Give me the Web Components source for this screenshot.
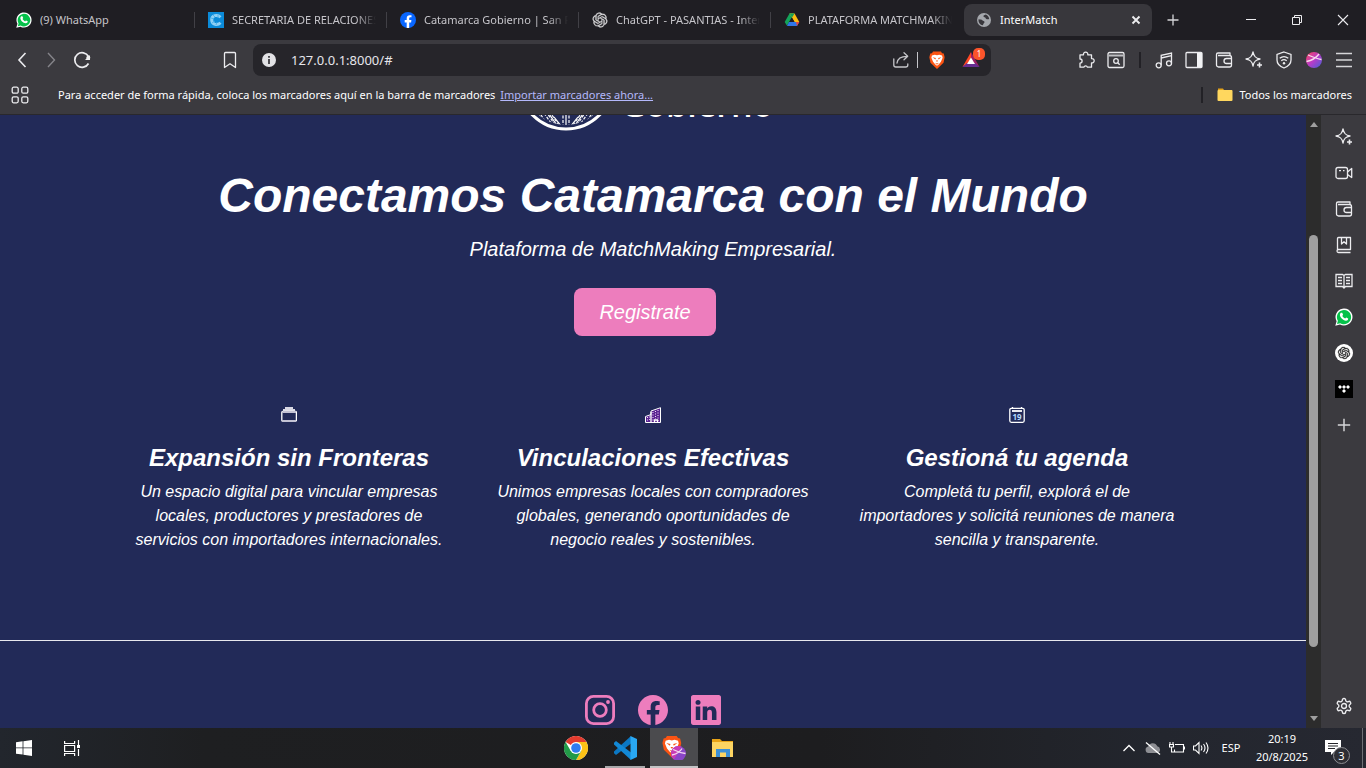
<!DOCTYPE html>
<html lang="es">
<head>
<meta charset="utf-8">
<title>InterMatch</title>
<style>
html, body { height: 100%; margin: 0; }
body { font-family: "Noto Sans", "Open Sans", sans-serif; font-size: 11px; color: #fff; background: #1f1e23; overflow: hidden; }
</style>
</head>
<body>
<desktop-shell></desktop-shell>

<script>
const KNOT = 'M22.2819 9.8211a5.9847 5.9847 0 0 0-.5157-4.9108 6.0462 6.0462 0 0 0-6.5098-2.9A6.0651 6.0651 0 0 0 4.9807 4.1818a5.9847 5.9847 0 0 0-3.9977 2.9 6.0462 6.0462 0 0 0 .7427 7.0966 5.98 5.98 0 0 0 .511 4.9107 6.051 6.051 0 0 0 6.5146 2.9001A5.9847 5.9847 0 0 0 13.2599 24a6.0557 6.0557 0 0 0 5.7718-4.2058 5.9894 5.9894 0 0 0 3.9977-2.9001 6.0557 6.0557 0 0 0-.7475-7.0729zm-9.022 12.6081a4.4755 4.4755 0 0 1-2.8764-1.0408l.1419-.0804 4.7783-2.7582a.7948.7948 0 0 0 .3927-.6813v-6.7369l2.02 1.1686a.071.071 0 0 1 .038.052v5.5826a4.504 4.504 0 0 1-4.4945 4.4944zm-9.6607-4.1254a4.4708 4.4708 0 0 1-.5346-3.0137l.142.0852 4.783 2.7582a.7712.7712 0 0 0 .7806 0l5.8428-3.3685v2.3324a.0804.0804 0 0 1-.0332.0615L9.74 19.9502a4.4992 4.4992 0 0 1-6.1408-1.6464zM2.3408 7.8956a4.485 4.485 0 0 1 2.3655-1.9728V11.6a.7664.7664 0 0 0 .3879.6765l5.8144 3.3543-2.0201 1.1685a.0757.0757 0 0 1-.071 0l-4.8303-2.7865A4.504 4.504 0 0 1 2.3408 7.872zm16.5963 3.8558L13.1038 8.364 15.1192 7.2a.0757.0757 0 0 1 .071 0l4.8303 2.7913a4.4944 4.4944 0 0 1-.6765 8.1042v-5.6772a.79.79 0 0 0-.407-.667zm2.0107-3.0231l-.142-.0852-4.7735-2.7818a.7759.7759 0 0 0-.7854 0L9.409 9.2297V6.8974a.0662.0662 0 0 1 .0284-.0615l4.8303-2.7866a4.4992 4.4992 0 0 1 6.6802 4.66zM8.3065 12.863l-2.02-1.1638a.0804.0804 0 0 1-.038-.0567V6.0742a4.4992 4.4992 0 0 1 7.3757-3.4537l-.142.0805L8.704 5.459a.7948.7948 0 0 0-.3927.6813zm1.0976-2.3654l2.602-1.4998 2.6069 1.4998v2.9994l-2.5974 1.4997-2.6067-1.4997Z';
const LION = '<path fill="#fb5413" d="M4.500 .5h7l1 1.500 1.500.3.8 3.200-1 5L8 16 2.200 10.500l-1-5L2 2.300 3.500 2z"/><path fill="#fff" d="M3.500 4 6 3.300 8 3.800l2-.5 2.500.7.5 2-1.500 3.500L9.500 12 8 13 6.500 12l-2-2.500L3 6z"/><path fill="#fb5413" d="M4 5.600 7 6.300l-.4 1.300zM12 5.600 9 6.300l.4 1.300zM7 8.500h2l-1 1.300zM6.200 10.400 8 11.200l1.800-.8L8 12.200z"/>';

/* name: [viewBox, markup]; outlined glyphs inherit stroke and fill from the root <svg> */
const ICONS = {
  whatsapp: ['0 0 18 18', '<path fill="#fff" stroke="none" d="M.3 17.700l1.300-4.500A8.500 8.500 0 1 1 5 16.500z"/><path fill="#05c24a" stroke="none" d="M2 16l.9-3.200A7.100 7.100 0 1 1 5.300 15.200z"/><path fill="#fff" stroke="none" d="M6 4.800h1.200l.9 2-.8 1.200c.7 1.200 1.600 2 2.900 2.600l1-1.100 2 1c0 1.500-1 2.300-2.300 2.200C7.800 12.300 5 9.300 4.900 7c0-1 .4-1.800 1.100-2.200z"/>'],
  catamarca: ['0 0 16 16', '<path fill="#0b8bd9" stroke="none" d="M0 0h16v16H0z"/><path stroke="#8fd0f5" stroke-width="3" d="M12.500 5.200C9.500 2.200 3.500 3 3.700 8s5.800 5.800 8.800 2.800"/><path stroke="#3fabe8" stroke-width=".8" d="M3 6l3 1M5 3l2 2M4 11l3-2M8 13l1-3M10 3v3"/>'],
  facebook: ['0 0 16 16', '<circle cx="8" cy="8" r="8" fill="#0866ff" stroke="none"/><path fill="#fff" stroke="none" d="M6.700 16v-5.600h-2V8h2V6.300c0-2 1.200-3.100 3-3.100.9 0 1.800.1 1.800.1v2h-1c-1 0-1.300.6-1.300 1.200V8h2.200l-.3 2.400H9.200V16z"/>'],
  gpt: ['-1 -1 26 26', `<path fill="#d9d9dc" stroke="#d9d9dc" stroke-width=".5" d="${KNOT}"/>`],
  gptDisc: ['-6 -6 36 36', `<circle cx="12" cy="12" r="18" fill="#fff" stroke="none"/><path fill="#222" stroke="#222" stroke-width=".6" d="${KNOT}"/>`],
  drive: ['0 0 16 16', '<g stroke="none"><path fill="#14a35a" d="M5.500 1.500H10L5.200 9.800 3 13.800.7 9.900z"/><path fill="#fdbd10" d="M5.500 1.500h5l4.800 8.400h-4.800z"/><path fill="#14a35a" d="M5.500 1.500h5L8 5.700z"/><path fill="#2f76e8" d="M5 9.900h10.300L13 14H3z"/><path fill="#e8453c" d="M12 9.900h3.300L13 14z"/><path fill="#1f1e23" d="M8 5.700l2.500 4.200h-5z"/></g>'],
  globe: ['0 0 16 16', '<circle cx="8" cy="8" r="7" fill="#a4a7ac" stroke="none"/><path fill="#38373c" stroke="none" d="M2.600 7.200c2 .2 3 .2 3.700 1 .7 1 2.200.6 2.300 1.800.1 1-1.500 1-1.600 3.300C4 13 2 10 2.600 7.200zM9.800 2.500c-1.500.6-2.500.8-2.300 2 .2 1 1.800.5 2.200 1.700.3 1 1.700 1.200 3.500.8-.2-2-1.600-3.900-3.400-4.500z"/>'],
  close: ['0 0 16 16', '<path stroke-width="1.900" d="M4.500 4.500l7 7m0-7l-7 7"/>'],
  plus: ['0 0 16 16', '<path stroke="#d6d6d9" d="M8 2.500v11M2.500 8h11"/>'],
  min: ['0 0 16 16', '<path stroke-width="1" d="M3 7.500h10"/>'],
  restore: ['0 0 16 16', '<path stroke-width="1" d="M3.500 5.500h7v7h-7zM5.500 5.500v-2h7v7h-2"/>'],
  winclose: ['0 0 16 16', '<path stroke-width="1.100" d="M3 3l10 10M13 3L3 13"/>'],
  back: ['0 0 18 18', '<path stroke-width="1.600" d="M12.500 2L6 9l6.500 7"/>'],
  forward: ['0 0 18 18', '<path stroke="#85848a" stroke-width="1.400" d="M5 2l6.500 7L5 16"/>'],
  reload: ['0 0 18 18', '<path stroke-width="1.700" d="M15.500 12.500A7.300 7.300 0 1 1 15.500 5.500"/><circle cx="15.300" cy="6.700" r="2" fill="#eee" stroke="none"/><path fill="#eee" stroke="none" d="M17 4v5h-5z"/>'],
  bookmark: ['0 0 18 18', '<path stroke-linejoin="round" d="M4.500 1.500h9a1 1 0 0 1 1 1V16.500L9 12.800 3.500 16.500V2.500a1 1 0 0 1 1-1z"/>'],
  info: ['0 0 18 18', '<circle cx="9" cy="9" r="7" fill="#e2e2e5" stroke="none"/><path stroke="#26252a" stroke-width="1.600" d="M9 8v5M9 5v1.700"/>'],
  share: ['0 0 18 18', '<path stroke="#c5c5c9" stroke-linecap="round" stroke-linejoin="round" d="M1.800 8v6a2 2 0 0 0 2 2h10a2 2 0 0 0 2-2v-1M5 12c.5-4 3-6.700 10-6.700M12 1.800l3.700 3.500L12 8.800"/>'],
  brave: ['0 0 16 16', `<g stroke="none">${LION}</g>`],
  rewards: ['0 0 18 18', '<g stroke="none"><path fill="#ff4724" d="M9 1L.5 16 9 11z"/><path fill="#9e1f63" d="M9 1l8.500 15L9 10z"/><path fill="#662d91" d="M.5 16h17L13 12H5z"/><path fill="#fff" d="M9 6.500l4 6.500H5z"/></g>'],
  puzzle: ['0 0 18 18', '<path stroke-linejoin="round" d="M3 3.800h3.500a2.200 2.200 0 1 1 4.300 0h3.700v3.800a2.200 2.200 0 1 1 0 4.300v4.300h-4a2 2 0 0 0-3.700 0H3v-4a2.100 2.100 0 1 0 0-4.200z"/>'],
  pagesearch: ['0 0 18 18', '<rect x="1" y="1.500" width="16" height="15" rx="1.500"/><path stroke-width="2" stroke="#bfbfc3" d="M1.500 4.500h15"/><circle cx="9" cy="10" r="2.300"/><path d="M10.700 11.700l2 2"/>'],
  music: ['0 0 18 18', '<circle cx="3.700" cy="14.300" r="2.500"/><circle cx="14" cy="12.300" r="2.500"/><path d="M6.200 14.300V4.300L16.500 2v10.300M6.200 7L16.500 4.700"/>'],
  panel: ['0 0 18 18', '<rect x="1" y="1.500" width="16" height="15" rx="1"/><path fill="#f2f2f4" stroke="none" d="M12 2h5v14h-5z"/>'],
  wallet: ['0 0 18 18', '<path stroke-linejoin="round" d="M3 4.500h11.500a2 2 0 0 1 2 2V14a2 2 0 0 1-2 2h-11a2 2 0 0 1-2-2V3.500a1.500 1.500 0 0 1 1.500-1.500h12v2.500M16.500 7.500h-5a2.500 2.500 0 0 0 0 5h5"/>'],
  spark: ['0 0 18 18', '<path stroke-linejoin="round" d="M8 1c.9 4.500 2.500 6.100 7 7-4.500.9-6.100 2.500-7 7-.9-4.500-2.500-6.100-7-7 4.500-.9 6.100-2.500 7-7z"/><path stroke-width="1.600" d="M14.500 11.500v5M12 14h5"/>'],
  vpn: ['0 0 18 18', '<path d="M9 1l7 2.500V9c0 4-3 6.500-7 8-4-1.500-7-4-7-8V3.500z"/><path d="M4.700 7.300c2.500-2 6-2 8.600 0M6.300 9.800c1.600-1.300 3.800-1.300 5.400 0"/><circle cx="9" cy="12.200" r="1.200" fill="#eee" stroke="none"/>'],
  ball: ['0 0 18 18', '<defs><linearGradient id="b" x1="0" x2="1" y2="1"><stop offset=".1" stop-color="#f0456f"/><stop offset=".5" stop-color="#b83bc8"/><stop offset="1" stop-color="#4361d8"/></linearGradient></defs><circle cx="9" cy="9" r="8" fill="url(#b)" stroke="none"/><path stroke="#f9d9ee" d="M1.500 10.500C7 9.500 11 7 14 3M3 4c4 1.500 9 4 13.500 4.500"/>'],
  menu: ['0 0 18 18', '<path stroke="#d6d6d9" stroke-width="1.600" d="M1 2.500h16M1 9h16M1 15.500h16"/>'],
  grid: ['0 0 18 18', '<rect x="1.200" y="1.200" width="6" height="6" rx="1.500"/><rect x="10.800" y="1.200" width="6" height="6" rx="1.500"/><rect x="1.200" y="10.800" width="6" height="6" rx="1.500"/><rect x="10.800" y="10.800" width="6" height="6" rx="1.500"/>'],
  folder: ['0 0 16 16', '<path fill="#e3a21a" stroke="none" d="M1 1.500h5L7 3h8v9H1z"/><rect x=".5" y="3" width="15" height="11" rx="1" fill="#ffd75e" stroke="none"/>'],
  video: ['0 0 18 18', '<rect x="1" y="3.500" width="11.500" height="11" rx="2"/><path stroke-linejoin="round" d="M12.500 8l4.200-3.500v9L12.500 10.500M4 6.700h2M8 6.700h1.500"/>'],
  reading: ['0 0 18 18', '<path stroke-linejoin="round" d="M2.500 14.500V2.500a1 1 0 0 1 1-1h12v12h-12a1.300 1.300 0 0 0 0 3h12M6.500 1.500v6.500L9 5.800 11.500 8V1.500"/>'],
  book: ['0 0 18 18', '<path d="M1 2.500h6.500L9 3.500l1.500-1H17v12h-6.500L9 16l-1.500-1.500H1zM9 3.500V16.500M3 5.500h4M3 8.500h4M3 11.500h4M11 5.500h4M11 8.500h4M11 11.500h4"/>'],
  tidal: ['0 0 18 18', '<path fill="#000" stroke="none" d="M0 0h18v18H0z"/><path fill="#fff" stroke="none" d="M5 5l2 2-2 2-2-2zM9 5l2 2-2 2-2-2zM13 5l2 2-2 2-2-2zM9 9l2 2-2 2-2-2z"/>'],
  gear: ['0 0 24 24', '<path stroke-width="1.800" d="M12.220 2h-.44a2 2 0 0 0-2 2v.18a2 2 0 0 1-1 1.730l-.43.25a2 2 0 0 1-2 0l-.15-.08a2 2 0 0 0-2.730.73l-.22.38a2 2 0 0 0 .73 2.730l.15.1a2 2 0 0 1 1 1.720v.51a2 2 0 0 1-1 1.740l-.15.09a2 2 0 0 0-.73 2.730l.22.38a2 2 0 0 0 2.730.73l.15-.08a2 2 0 0 1 2 0l.43.25a2 2 0 0 1 1 1.730V20a2 2 0 0 0 2 2h.44a2 2 0 0 0 2-2v-.18a2 2 0 0 1 1-1.730l.43-.25a2 2 0 0 1 2 0l.15.08a2 2 0 0 0 2.730-.73l.22-.39a2 2 0 0 0-.73-2.730l-.15-.08a2 2 0 0 1-1-1.740v-.5a2 2 0 0 1 1-1.740l.15-.09a2 2 0 0 0 .73-2.730l-.22-.38a2 2 0 0 0-2.730-.73l-.15.08a2 2 0 0 1-2 0l-.43-.25a2 2 0 0 1-1-1.730V4a2 2 0 0 0-2-2z"/><circle cx="12" cy="12" r="3.300" stroke-width="1.800"/>'],
  briefcase: ['0 0 16 16', '<path fill="#d9d8e4" stroke="none" d="M4 0h8v2h2v2H2V2h2z"/><rect x=".8" y="4.500" width="14.600" height="9.700" rx="1" stroke="#fff"/><path stroke="#c3c2d4" stroke-width="1.800" d="M1.500 14h13.500M1.500 5h13.500"/>'],
  building: ['0 0 16 16', '<path fill="#5a2391" stroke="#fff" stroke-width="1" d="M.5 15.500V9.500l5.500-2V4L15.500.7v14.800z"/><path stroke="#f3d9f6" stroke-width="1.100" stroke-dasharray="1.100 1.400" d="M8 5v9M10.500 4v8M13 3v12M2.500 10v5M4.700 9.500v5"/><path stroke="#fff" d="M6 5v10M9.500 15.500V13h3v2.500"/>'],
  calendar: ['0 0 16 16', '<rect x=".8" y="1.300" width="14.400" height="14" rx="1.500" stroke="#fff"/><path stroke="#fff" stroke-width="1.800" d="M3 4h10"/><path stroke="#fff" d="M3.500 0v2M12.500 0v2"/><text x="8" y="13" text-anchor="middle" font-size="8" font-weight="700" font-style="normal" font-family="Noto Sans, sans-serif" fill="#b5dcff" stroke="none">19</text>'],
  ig: ['0 0 30 30', '<rect x="1.400" y="1.400" width="27.200" height="27.200" rx="7" stroke="#ed7dbd" stroke-width="2.800"/><circle cx="15" cy="15" r="6.300" stroke="#ed7dbd" stroke-width="2.800"/><circle cx="23" cy="7" r="1.900" fill="#ed7dbd" stroke="none"/>'],
  fb: ['0 0 16 16', '<path fill="#ed7dbd" stroke="none" d="M16 8.049c0-4.446-3.582-8.050-8-8.050C3.580 0-.002 3.603-.002 8.050c0 4.017 2.926 7.347 6.750 7.951v-5.625h-2.030V8.050H6.750V6.275c0-2.017 1.195-3.131 3.022-3.131.876 0 1.791.157 1.791.157v1.980h-1.009c-.993 0-1.303.621-1.303 1.258v1.510h2.218l-.354 2.326H9.250V16c3.824-.604 6.750-3.934 6.750-7.951"/>'],
  li: ['0 0 16 16', '<path fill="#ed7dbd" stroke="none" d="M0 1.146C0 .513.526 0 1.175 0h13.650C15.474 0 16 .513 16 1.146v13.708c0 .633-.526 1.146-1.175 1.146H1.175C.526 16 0 15.487 0 14.854zm4.943 12.248V6.169H2.542v7.225zm-1.200-8.212c.837 0 1.358-.554 1.358-1.248-.015-.709-.520-1.248-1.342-1.248S2.400 3.226 2.400 3.934c0 .694.521 1.248 1.327 1.248zm4.908 8.212V9.359c0-.216.016-.432.080-.586.173-.431.568-.878 1.232-.878.869 0 1.216.662 1.216 1.634v3.865h2.401V9.250c0-2.220-1.184-3.252-2.764-3.252-1.274 0-1.845.7-2.165 1.193v.025h-.016l.016-.025V6.169h-2.400c.03.678 0 7.225 0 7.225z"/>'],
  windows: ['0 0 16 16', '<path fill="#fff" stroke="none" d="M0 2.200l6.600-.9v6.200H0zM7.400 1.200L16 0v7.500H7.400zM0 8.300h6.600v6.300L0 13.700zM7.400 8.300H16V16l-8.600-1.200z"/>'],
  taskview: ['0 0 16 16', '<path stroke="#fff" stroke-width="1.200" d="M.6 1v2.500h10V1M.6 5.500h10v6H.6zM.6 16v-2.500h10V16M14.500 0v5M14.500 9v7"/><path fill="#fff" stroke="none" d="M13 5h3v3h-3z"/>'],
  chrome: ['0 0 24 24', '<g stroke="none"><circle cx="12" cy="12" r="12" fill="#fff"/><path fill="#e33b2e" d="M12 12L1.600 6A12 12 0 0 1 22.400 6z"/><path fill="#fbc116" d="M12 6h10.400A12 12 0 0 1 12 24l5.200-9z"/><path fill="#229a48" d="M1.600 6l5.200 9L12 18l0 6A12 12 0 0 1 1.600 6z"/><path fill="#229a48" d="M12 24l5.200-9H7z"/><circle cx="12" cy="12" r="6" fill="#fff"/><circle cx="12" cy="12" r="4.800" fill="#2f7cf0"/></g>'],
  vscode: ['0 0 24 24', '<g stroke="none"><path fill="#0b78c4" d="M18 0L1 15.500v1.700L3 19l15-11.500z"/><path fill="#1389d6" d="M18 24L1 8.500V6.800L3 5l15 11.500z"/><path fill="#29a8f3" d="M17.500 0L24 3v18l-6.500 3z"/></g>'],
  bravetask: ['0 0 24 24', `<g stroke="none"><g transform="translate(-1.200 -.7) scale(1.380)">${LION}</g><circle cx="16.500" cy="17.500" r="7.500" fill="#8a45c8"/><path fill="#c83bb5" d="M9.500 15a7.500 7.500 0 0 1 10-4.500L12 23.500A7.500 7.500 0 0 1 9.500 15z"/></g><path stroke="#f4d7f0" stroke-width="1.300" d="M10 19c4-1 8-3 10-6.500M11 13.500c4 2 8 3.500 12.500 4"/>`],
  explorer: ['0 0 24 24', '<g stroke="none"><path fill="#e8a317" d="M1 3h8l2 2h11v5H1z"/><path fill="#fcd462" d="M1 6h21v15H1z"/><path fill="#3b8fd6" d="M5 13h14v8h-4v-4.500H9V21H5z"/></g>'],
  caret: ['0 0 16 16', '<path stroke="#fff" d="M2.500 11L8 5.500l5.500 5.500"/>'],
  cloud: ['0 0 16 16', '<path fill="#8e8f94" stroke="none" d="M3.500 13a3.300 3.300 0 0 1-.3-6.500 4.800 4.800 0 0 1 9-.3A3.500 3.500 0 0 1 12.500 13z"/><path stroke="#fff" d="M1 2.500l14 12"/>'],
  battery: ['0 0 16 16', '<path stroke="#fff" stroke-width="1.100" d="M6 4.500h8.500v7.500h-9M15.500 6.500v3M1 2v2.500M4 2v2.500M.5 4.500h4v2.500h-4zM2.500 7v5h3V9.500"/>'],
  volume: ['0 0 16 16', '<path stroke="#fff" stroke-width="1.100" d="M.5 6h2L6 2.500v11L2.500 10h-2zM8 5.500q1.800 2.500 0 5M10.500 4q3 4 0 8M13 2.500q4 5.500 0 11"/>'],
  notice: ['0 0 16 16', '<path fill="#fff" stroke="none" d="M0 0h16v12H9l-3 3v-3H0z"/><path stroke="#25262b" stroke-width="1.200" d="M3 3.500h10M3 6h10M3 8.500h7"/>'],
  seal: ['0 0 98 98', '<defs><clipPath id="c"><circle cx="49" cy="49" r="43"/></clipPath></defs><circle cx="49" cy="49" r="47" stroke="#fff" stroke-width="3"/><g clip-path="url(#c)" stroke="#fff" stroke-width="1.200"><path d="M49 98V50M45 94l-8-10M53 94l8-10M44 98L30 78M54 98l14-20" /><path stroke-dasharray="3 1.500" d="M46 78v16M52 78v16M42 92l-10-14M56 92l10-14M38 92l-8-12M60 92l8-12M34 90l-10-14M64 90l10-14M28 88l-8-12M70 88l8-12M24 85l-8-10M74 85l8-10"/></g>']
};

function define(name, css, html) {
  const template = document.createElement('template');
  template.innerHTML = `<style>*{box-sizing:border-box}button{font:inherit;color:inherit;background:none;border:0;padding:0;margin:0;cursor:pointer}${css}</style>${html}`;
  customElements.define(name, class extends HTMLElement {
    constructor() {
      super();
      this.attachShadow({ mode: 'open' }).append(template.content.cloneNode(true));
    }
  });
}

customElements.define('app-icon', class extends HTMLElement {
  connectedCallback() {
    if (this.shadowRoot) return;
    const [box, art] = ICONS[this.getAttribute('name')];
    const size = this.getAttribute('size') || 18;
    this.attachShadow({ mode: 'open' }).innerHTML =
      `<style>:host{display:block;flex:none;width:${size}px;height:${size}px}svg{display:block}</style>
       <svg width="${size}" height="${size}" viewBox="${box}" fill="none" stroke="#ececef" stroke-width="1.300" aria-hidden="true">${art}</svg>`;
  }
});

define('icon-button', `
  :host { display: block; flex: none; width: 30px; height: 30px; }
  button { width: 100%; height: 100%; display: flex; align-items: center; justify-content: center; }
`, `<button type="button"><slot></slot></button>`);

define('browser-tab', `
  :host { display: flex; align-items: center; gap: 8px; flex: 0 1 192px; min-width: 0; height: 32px; padding: 0 11px 0 13px; position: relative; color: #c6c5ca; }
  :host::after { content: ""; position: absolute; right: 0; top: 8px; width: 1px; height: 16px; background: #414046; }
  :host([plain])::after { display: none; }
  :host([active]) { background: #38373c; border-radius: 8px; color: #fff; flex-basis: 188px; margin-left: 1px; padding: 0 8px 0 12px; }
  .title { flex: 1; min-width: 0; font-size: 11px; line-height: 16px; white-space: nowrap; overflow: hidden; }
  :host([long]) .title { -webkit-mask-image: linear-gradient(to right, #000 calc(100% - 20px), transparent); }
`, `<slot name="icon"></slot><span class="title"><slot></slot></span><slot name="close"></slot>`);

define('tab-strip', `
  :host { display: flex; align-items: center; height: 40px; padding-left: 3px; background: #1f1e23; }
  .window { display: flex; margin-left: auto; }
  .window icon-button { width: 46px; }
  .add { margin-left: 6px; }
  .x { width: 16px; height: 16px; }
`, `
  <browser-tab><app-icon slot="icon" name="whatsapp" size="16"></app-icon>(9) WhatsApp</browser-tab>
  <browser-tab long><app-icon slot="icon" name="catamarca" size="16"></app-icon>SECRETARIA DE RELACIONES</browser-tab>
  <browser-tab long><app-icon slot="icon" name="facebook" size="16"></app-icon>Catamarca Gobierno | San Fernando</browser-tab>
  <browser-tab long><app-icon slot="icon" name="gpt" size="16"></app-icon>ChatGPT - PASANTIAS - InterMatch</browser-tab>
  <browser-tab long plain><app-icon slot="icon" name="drive" size="16"></app-icon>PLATAFORMA MATCHMAKING</browser-tab>
  <browser-tab active plain><app-icon slot="icon" name="globe" size="16"></app-icon>InterMatch<icon-button class="x" slot="close"><app-icon name="close" size="16"></app-icon></icon-button></browser-tab>
  <icon-button class="add"><app-icon name="plus" size="16"></app-icon></icon-button>
  <div class="window">
    <icon-button><app-icon name="min" size="16"></app-icon></icon-button>
    <icon-button><app-icon name="restore" size="16"></app-icon></icon-button>
    <icon-button><app-icon name="winclose" size="16"></app-icon></icon-button>
  </div>`);

define('address-bar', `
  :host { display: flex; align-items: center; height: 32px; background: #26252a; border-radius: 8px; padding: 0 5px 0 1px; min-width: 0; }
  input { flex: 1; min-width: 0; height: 24px; margin-left: 7px; padding: 0; border: 0; outline: 0; background: none; color: #e6e6ea; font: 13px/24px "Noto Sans", sans-serif; }
  hr { width: 1px; height: 16px; border: 0; margin: 0 4px 0 1px; background: #c5c5c9; }
  .rewards { padding-left: 4px; position: relative; }
  .badge { position: absolute; right: 1px; top: 3px; width: 12px; height: 12px; border-radius: 5px; background: #fb542b; font-size: 8px; line-height: 12px; text-align: center; }
`, `
  <icon-button><app-icon name="info"></app-icon></icon-button>
  <input type="text" aria-label="Dirección" value="127.0.0.1:8000/#">
  <icon-button><app-icon name="share"></app-icon></icon-button>
  <hr>
  <icon-button><app-icon name="brave"></app-icon></icon-button>
  <div class="rewards"><icon-button><app-icon name="rewards"></app-icon></icon-button><span class="badge">1</span></div>`);

define('nav-toolbar', `
  :host { display: grid; grid-template-columns: 246px minmax(0, 1fr) 368px; align-items: center; height: 40px; padding: 0 7px; background: #3b3a3f; }
  .side { display: flex; align-items: center; }
  .mark { margin: 0 8px 0 auto; }
  .tools { justify-content: flex-end; }
  hr { width: 2px; height: 16px; border: 0; margin: 0 8px; background: #222126; }
`, `
  <div class="side">
    <icon-button><app-icon name="back"></app-icon></icon-button>
    <icon-button><app-icon name="forward"></app-icon></icon-button>
    <icon-button><app-icon name="reload"></app-icon></icon-button>
    <icon-button class="mark"><app-icon name="bookmark"></app-icon></icon-button>
  </div>
  <address-bar></address-bar>
  <div class="side tools">
    <icon-button><app-icon name="puzzle"></app-icon></icon-button>
    <icon-button><app-icon name="pagesearch"></app-icon></icon-button>
    <hr>
    <icon-button><app-icon name="music"></app-icon></icon-button>
    <icon-button><app-icon name="panel"></app-icon></icon-button>
    <icon-button><app-icon name="wallet"></app-icon></icon-button>
    <icon-button><app-icon name="spark"></app-icon></icon-button>
    <icon-button><app-icon name="vpn"></app-icon></icon-button>
    <icon-button><app-icon name="ball"></app-icon></icon-button>
    <icon-button><app-icon name="menu"></app-icon></icon-button>
  </div>`);

define('bookmarks-bar', `
  :host { display: flex; align-items: center; height: 35px; padding: 0 14px 4px 5px; background: #3b3a3f; border-bottom: 1px solid #29282c; font-size: 11px; line-height: 16px; white-space: nowrap; }
  p { margin: 0 0 0 23px; }
  a { color: #b4b8fb; margin-left: 2px; }
  hr { width: 2px; height: 16px; border: 0; margin: 0 14px 0 auto; background: #222126; }
  button { display: flex; align-items: center; gap: 6px; }
`, `
  <icon-button><app-icon name="grid"></app-icon></icon-button>
  <p>Para acceder de forma rápida, coloca los marcadores aquí en la barra de marcadores <a href="#">Importar marcadores ahora...</a></p>
  <hr>
  <button type="button"><app-icon name="folder" size="16"></app-icon>Todos los marcadores</button>`);

define('feature-card', `
  :host { display: flex; flex-direction: column; align-items: center; text-align: center; }
  h2 { margin: 20px 0 7px; font-size: 24px; line-height: 30px; }
  p { margin: 0; font-size: 16px; line-height: 24px; }
`, `<slot name="icon"></slot><h2><slot name="title"></slot></h2><p><slot></slot></p>`);

define('match-page', `
  :host { display: block; min-width: 0; overflow: hidden; background: #222a58; font-family: "Liberation Sans", Arial, sans-serif; font-style: italic; }
  .brand { display: flex; align-items: flex-end; justify-content: center; gap: 6px; height: 16px; overflow: hidden; padding-right: 16px; }
  .brand span { font: 600 34px/48px "Open Sans", sans-serif; padding-bottom: 3px; }
  header { display: flex; flex-direction: column; align-items: center; text-align: center; }
  h1 { margin: 36px 0 9px; font-size: 48px; line-height: 58px; }
  header p { margin: 0 0 24px; font-size: 20px; line-height: 30px; }
  header button { height: 48px; padding: 0 25px; margin-right: 16px; border-radius: 8px; background: #ed7dbd; font-size: 20px; }
  .features { display: grid; grid-template-columns: repeat(3, minmax(0, 318px)); gap: 46px; justify-content: center; margin: 71px 0 88px; }
  footer { display: flex; justify-content: center; gap: 23px; padding-top: 54px; border-top: 1px solid #e8e8ee; }
`, `
  <div class="brand"><app-icon name="seal" size="98"></app-icon><span>Gobierno</span></div>
  <header>
    <h1>Conectamos Catamarca con el Mundo</h1>
    <p>Plataforma de MatchMaking Empresarial.</p>
    <button type="button">Registrate</button>
  </header>
  <section class="features">
    <feature-card><app-icon slot="icon" name="briefcase" size="16"></app-icon><span slot="title">Expansión sin Fronteras</span>Un espacio digital para vincular empresas locales, productores y prestadores de servicios con importadores internacionales.</feature-card>
    <feature-card><app-icon slot="icon" name="building" size="16"></app-icon><span slot="title">Vinculaciones Efectivas</span>Unimos empresas locales con compradores globales, generando oportunidades de negocio reales y sostenibles.</feature-card>
    <feature-card><app-icon slot="icon" name="calendar" size="16"></app-icon><span slot="title">Gestioná tu agenda</span>Completá tu perfil, explorá el de importadores y solicitá reuniones de manera sencilla y transparente.</feature-card>
  </section>
  <footer>
    <a href="#" aria-label="Instagram"><app-icon name="ig" size="30"></app-icon></a>
    <a href="#" aria-label="Facebook"><app-icon name="fb" size="30"></app-icon></a>
    <a href="#" aria-label="LinkedIn"><app-icon name="li" size="30"></app-icon></a>
  </footer>`);

define('scroll-rail', `
  :host { display: flex; flex-direction: column; align-items: center; width: 15px; padding: 7px 0; background: #2c2c2c; }
  i { border: 4px solid transparent; }
  .up { border-top: 0; border-bottom: 5px solid #9f9f9f; margin-bottom: 5px; }
  .down { border-bottom: 0; border-top: 5px solid #9f9f9f; margin-top: 5px; }
  .gap { flex: 103; }
  .thumb { flex: 412; width: 9px; border-radius: 5px; background: #9f9f9f; }
  .rest { flex: 64; }
`, `<i class="up"></i><div class="gap"></div><div class="thumb"></div><div class="rest"></div><i class="down"></i>`);

define('side-rail', `
  :host { display: flex; flex-direction: column; align-items: center; width: 45px; gap: 6px; padding: 7px 0; background: #3b3a3f; }
  .last { margin-top: auto; }
`, `
  <icon-button><app-icon name="spark"></app-icon></icon-button>
  <icon-button><app-icon name="video"></app-icon></icon-button>
  <icon-button><app-icon name="wallet"></app-icon></icon-button>
  <icon-button><app-icon name="reading"></app-icon></icon-button>
  <icon-button><app-icon name="book"></app-icon></icon-button>
  <icon-button><app-icon name="whatsapp"></app-icon></icon-button>
  <icon-button><app-icon name="gptDisc"></app-icon></icon-button>
  <icon-button><app-icon name="tidal"></app-icon></icon-button>
  <icon-button><app-icon name="plus"></app-icon></icon-button>
  <icon-button class="last"><app-icon name="gear"></app-icon></icon-button>`);

define('task-bar', `
  :host { display: grid; grid-template-columns: 1fr auto 1fr; height: 40px; background: linear-gradient(to right, #22262d, #1e1f21 15%, #1d1d1f 60%, #23262e 85%, #262831); font-size: 11px; line-height: 18px; }
  .group { display: flex; align-items: center; }
  .group > icon-button { width: 48px; height: 40px; }
  .apps { padding-right: 68px; gap: 1px; }
  .apps > .open { box-shadow: inset 0 -2px #a9a9ab; width: 40px; margin: 0 4px; }
  .apps .current { background: #4b4b4e; box-shadow: inset 0 -2px #c4c4c6; }
  .group.tray { justify-content: flex-end; }
  .group.tray > icon-button { width: 24px; }
  .lang { width: 36px; text-align: center; }
  .clock { width: 66px; text-align: center; }
  .bell { position: relative; width: 48px; height: 40px; display: flex; align-items: center; padding-left: 10px; border-right: 1px solid #6e7075; margin-right: 3px; }
  .badge { position: absolute; left: 18px; top: 19px; width: 17px; height: 17px; border-radius: 9px; border: 1px solid #8c8d92; background: #2d2e34; line-height: 15px; text-align: center; }
`, `
  <div class="group">
    <icon-button><app-icon name="windows" size="16"></app-icon></icon-button>
    <icon-button><app-icon name="taskview" size="16"></app-icon></icon-button>
  </div>
  <div class="group apps">
    <icon-button><app-icon name="chrome" size="24"></app-icon></icon-button>
    <icon-button class="open"><app-icon name="vscode" size="24"></app-icon></icon-button>
    <icon-button class="current"><app-icon name="bravetask" size="24"></app-icon></icon-button>
    <icon-button><app-icon name="explorer" size="24"></app-icon></icon-button>
  </div>
  <div class="group tray">
    <icon-button><app-icon name="caret" size="16"></app-icon></icon-button>
    <icon-button><app-icon name="cloud" size="16"></app-icon></icon-button>
    <icon-button><app-icon name="battery" size="16"></app-icon></icon-button>
    <icon-button><app-icon name="volume" size="16"></app-icon></icon-button>
    <button class="lang" type="button">ESP</button>
    <div class="clock"><div>20:19</div><div>20/8/2025</div></div>
    <div class="bell"><app-icon name="notice" size="16"></app-icon><span class="badge">3</span></div>
  </div>`);

define('desktop-shell', `
  :host { display: flex; flex-direction: column; height: 100vh; }
  main { flex: 1; min-height: 0; display: grid; grid-template-columns: minmax(0, 1fr) auto auto; }
`, `
  <tab-strip></tab-strip>
  <nav-toolbar></nav-toolbar>
  <bookmarks-bar></bookmarks-bar>
  <main>
    <match-page></match-page>
    <scroll-rail></scroll-rail>
    <side-rail></side-rail>
  </main>
  <task-bar></task-bar>`);
</script>
</body>
</html>
